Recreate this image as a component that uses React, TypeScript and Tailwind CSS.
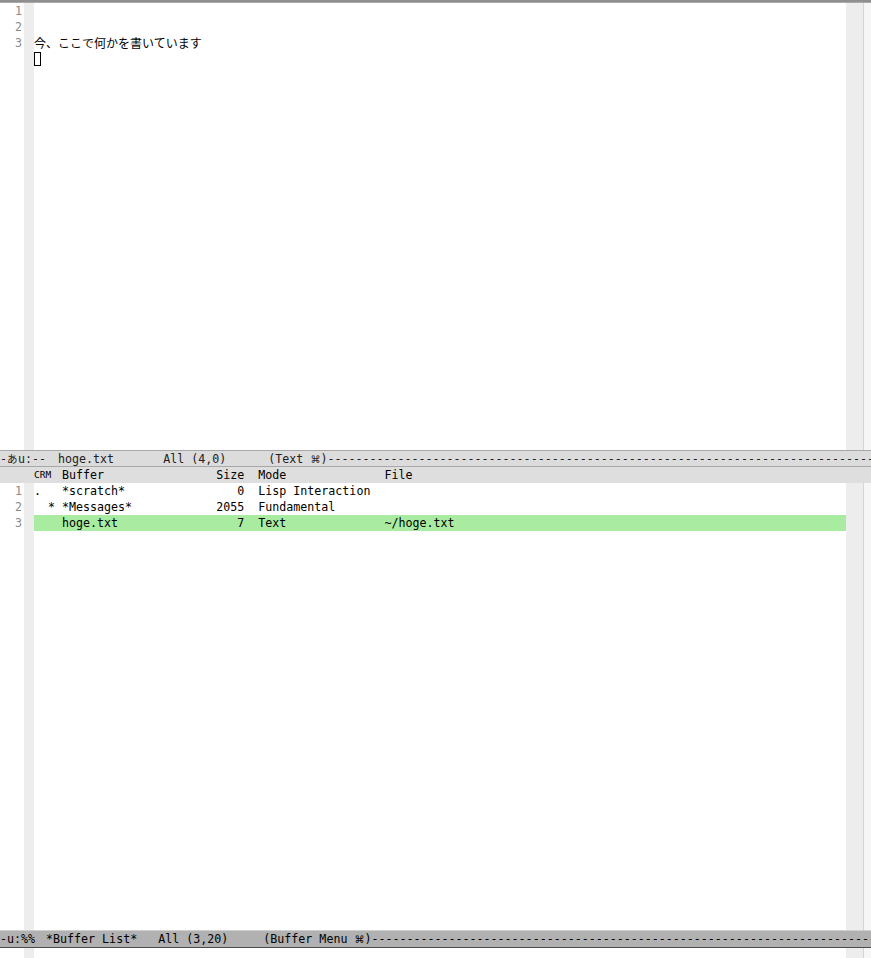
import React from "react";

const mono = { fontFamily: '"DejaVu Sans Mono", "Noto Sans CJK JP", monospace' };
const cjk = { fontFamily: '"Noto Sans CJK JP", sans-serif' };
const sym = { fontFamily: '"DejaVu Sans", "Noto Sans", sans-serif' };

function Gutter({ nums }: { nums: string[] }) {
  return (
    <div className="w-[24px] shrink-0 flex flex-col bg-white">
      {nums.map((n, i) => (
        <div key={i} className="h-[16px] leading-[16px] text-right pr-[2px] text-[#8a8a8a]">
          {n}
        </div>
      ))}
    </div>
  );
}

function RightEdge() {
  return (
    <>
      <div className="w-[17px] shrink-0 bg-[#ededed]" />
      <div className="w-[8px] shrink-0 bg-[#f6f6f6] border-l border-[#d4d4d4]" />
    </>
  );
}

const DASHES = "-".repeat(140);

function Cmd() {
  return (
    <span className="text-[10px]" style={sym}>
      ⌘
    </span>
  );
}

export default function App() {
  return (
    <div
      className="w-[871px] h-[958px] flex flex-col bg-white overflow-hidden text-[11.65px] text-black"
      style={mono}
    >
      <div className="h-[3px] shrink-0 bg-[#8f8f8f] border-b border-[#a9a9a9]" />

      {/* Window 1 */}
      <div className="h-[447px] shrink-0 flex">
        <Gutter nums={["1", "2", "3"]} />
        <div className="w-[10px] shrink-0 bg-[#ededed]" />
        <div className="flex-1 flex flex-col">
          <div className="h-[16px]" />
          <div className="h-[16px]" />
          <div className="h-[16px] leading-[16px] whitespace-pre text-[12px]" style={cjk}>
            今、ここで何かを書いています
          </div>
          <div className="h-[16px] flex items-center">
            <div className="w-[7px] h-[14px] border border-black" />
          </div>
        </div>
        <RightEdge />
      </div>

      {/* Mode line 1 (inactive) */}
      <div className="h-[17px] shrink-0 bg-[#dcdcdc] border-y border-[#a8a8a8] leading-[15px] whitespace-pre overflow-hidden text-[#222]">
        -<span className="inline-block w-[11px] text-[10.5px]" style={cjk}>あ</span>u:--<span className="inline-block w-[12px]" />hoge.txt       All (4,0)      (Text <Cmd />){DASHES}
      </div>

      {/* Header line */}
      <div className="h-[16px] shrink-0 bg-[#dedede] flex leading-[16px] whitespace-pre">
        <div className="w-[34px] shrink-0" />
        <span className="inline-block w-[28px] text-[9.5px]">CRM</span>
        <span>Buffer                Size  Mode              File</span>
      </div>

      {/* Window 2 */}
      <div className="flex-1 flex min-h-0">
        <Gutter nums={["1", "2", "3"]} />
        <div className="w-[10px] shrink-0 bg-[#ededed]" />
        <div className="flex-1 flex flex-col whitespace-pre leading-[16px]">
          <div className="h-[16px]">{".   *scratch*                0  Lisp Interaction"}</div>
          <div className="h-[16px]">{"  * *Messages*            2055  Fundamental"}</div>
          <div className="h-[16px] bg-[#a9eca1]">{"    hoge.txt                 7  Text              ~/hoge.txt"}</div>
        </div>
        <RightEdge />
      </div>

      {/* Mode line 2 (active) */}
      <div className="h-[18px] shrink-0 bg-[#b1b1b1] border-t border-[#cfcfcf] border-b border-b-[#4a4a4a] leading-[16px] whitespace-pre overflow-hidden text-black">
        -u:%%<span className="inline-block w-[11px]" />*Buffer List*   All (3,20)     (Buffer Menu <Cmd />){DASHES}
      </div>

      {/* Echo area */}
      <div className="h-[10px] shrink-0 flex">
        <div className="w-[24px] shrink-0" />
        <div className="w-[10px] shrink-0 bg-[#ededed]" />
        <div className="flex-1" />
        <RightEdge />
      </div>
    </div>
  );
}
